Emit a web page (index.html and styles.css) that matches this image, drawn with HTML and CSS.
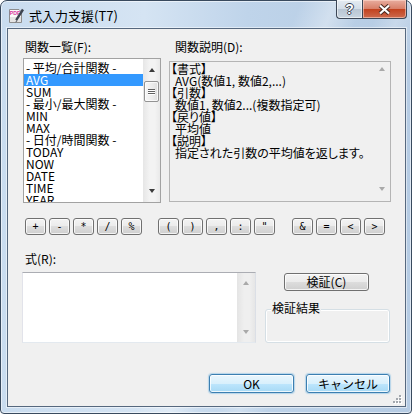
FILE: index.html
```html
<!DOCTYPE html>
<html lang="ja">
<head>
<meta charset="utf-8">
<title>式入力支援(T7)</title>
<link rel="stylesheet" href="styles.css">
</head>
<body>
<div class="window">
  <div class="titlebar">
    <svg class="app-icon" width="16" height="16" viewBox="0 0 16 16">
      <path d="M1.5 1.5h9.5l2.5 2.5v10.5h-12z" fill="#fbfbfb" stroke="#8d8d8d"/>
      <rect x="2" y="9" width="11" height="5" fill="#e4e4e4"/>
      <text x="1.8" y="7.2" font-size="5.2" font-family="Liberation Sans, sans-serif" font-weight="bold" fill="#d8379b">PDF</text>
      <path d="M15 1.5 L8.2 12.2" stroke="#3d4450" stroke-width="2.4"/>
      <path d="M8.2 12.2 L7.4 14.4 L9.4 13" fill="#3d4450"/>
    </svg>
    <span class="title">式入力支援(T7)</span>
    <div class="caption">
      <div class="cap help"><span>?</span></div>
      <div class="cap close">
        <svg width="13" height="11" viewBox="0 0 13 11">
          <path d="M2 1.5 L11 9.5 M11 1.5 L2 9.5" stroke="#4a2a22" stroke-width="4.2"/>
          <path d="M2 1.5 L11 9.5 M11 1.5 L2 9.5" stroke="#ffffff" stroke-width="2.2"/>
        </svg>
      </div>
    </div>
  </div>

  <div class="client">
    <div class="top">
      <div class="list-col">
        <div class="label">関数一覧(F):</div>
        <div class="listbox">
          <ul class="items">
            <li>- 平均/合計関数 -</li>
            <li class="sel">AVG</li>
            <li>SUM</li>
            <li>- 最小/最大関数 -</li>
            <li>MIN</li>
            <li>MAX</li>
            <li>- 日付/時間関数 -</li>
            <li>TODAY</li>
            <li>NOW</li>
            <li>DATE</li>
            <li>TIME</li>
            <li>YEAR</li>
          </ul>
          <div class="vscroll">
            <div class="sb-btn"><i class="arrow up"></i></div>
            <div class="thumb"><i></i><i></i><i></i></div>
            <div class="track"></div>
            <div class="sb-btn"><i class="arrow down"></i></div>
          </div>
        </div>
      </div>
      <div class="desc-col">
        <div class="label">関数説明(D):</div>
        <div class="descbox">
          <div class="desc-text">
            <div class="h">【書式】</div>
            <div class="v">AVG(数値1, 数値2,...)</div>
            <div class="h">【引数】</div>
            <div class="v">数値1, 数値2...(複数指定可)</div>
            <div class="h">【戻り値】</div>
            <div class="v">平均値</div>
            <div class="h">【説明】</div>
            <div class="v">指定された引数の平均値を返します。</div>
          </div>
          <div class="vscroll disabled">
            <div class="sb-btn top-btn"><i class="arrow up"></i></div>
            <div class="track"></div>
            <div class="sb-btn bottom-btn"><i class="arrow down"></i></div>
          </div>
        </div>
      </div>
    </div>

    <div class="opbar">
      <div class="opgroup">
        <button class="op">+</button>
        <button class="op">-</button>
        <button class="op">*</button>
        <button class="op">/</button>
        <button class="op">%</button>
      </div>
      <div class="opgroup g2">
        <button class="op">(</button>
        <button class="op">)</button>
        <button class="op">,</button>
        <button class="op">:</button>
        <button class="op">"</button>
      </div>
      <div class="opgroup g3">
        <button class="op">&amp;</button>
        <button class="op">=</button>
        <button class="op">&lt;</button>
        <button class="op">&gt;</button>
      </div>
    </div>

    <div class="bottom">
      <div class="expr-col">
        <div class="label">式(R):</div>
        <div class="exprbox">
          <div class="expr-input"></div>
          <div class="vscroll expr-scroll">
            <div class="sb-btn"><i class="arrow up dim"></i></div>
            <div class="track"></div>
            <div class="sb-btn"><i class="arrow down dim"></i></div>
          </div>
        </div>
      </div>
      <div class="verify-col">
        <button class="btn verify">検証(C)</button>
        <div class="result">
          <span class="legend">検証結果</span>
        </div>
      </div>
    </div>

    <div class="actions">
      <button class="btn default ok">OK</button>
      <button class="btn default cancel">キャンセル</button>
    </div>

    <svg class="grip" width="9" height="9" viewBox="0 0 9 9">
      <g fill="#ffffff">
        <rect x="7" y="1" width="2" height="2"/><rect x="4" y="4" width="2" height="2"/><rect x="7" y="4" width="2" height="2"/>
        <rect x="1" y="7" width="2" height="2"/><rect x="4" y="7" width="2" height="2"/><rect x="7" y="7" width="2" height="2"/>
      </g>
      <g fill="#a3a8ae">
        <rect x="6" y="0" width="2" height="2"/><rect x="3" y="3" width="2" height="2"/><rect x="6" y="3" width="2" height="2"/>
        <rect x="0" y="6" width="2" height="2"/><rect x="3" y="6" width="2" height="2"/><rect x="6" y="6" width="2" height="2"/>
      </g>
    </svg>
  </div>
</div>
</body>
</html>
```

FILE: styles.css
```css
* { box-sizing: border-box; }

html, body {
  margin: 0;
  padding: 0;
}

body {
  width: 412px;
  height: 414px;
  overflow: hidden;
  background: #ffffff;
  font-family: "Noto Sans CJK JP", "Noto Sans", sans-serif;
  font-size: 12px;
  color: #000;
}

/* ---------- window frame ---------- */
.window {
  width: 412px;
  height: 414px;
  display: flex;
  flex-direction: column;
  padding: 0 5px 6px 6px;
  border: 1px solid #394a5e;
  border-radius: 7px 7px 4px 4px;
  background:
    linear-gradient(112deg, rgba(255,255,255,0) 52%, rgba(255,255,255,0.35) 58%, rgba(255,255,255,0) 63%, rgba(255,255,255,0) 66%, rgba(255,255,255,0.25) 70%, rgba(255,255,255,0) 75%),
    linear-gradient(90deg, #c9dcef 0%, #d5e4f3 35%, #bfd4ea 60%, #b5cbe3 100%);
  box-shadow: inset 0 0 0 1px rgba(255,255,255,0.55);
}

.titlebar {
  height: 27px;
  display: flex;
  align-items: flex-start;
  flex: none;
}

.app-icon {
  margin: 7px 0 0 1px;
  flex: none;
}

.title {
  margin: 7px 0 0 5px;
  font-size: 13px;
  line-height: 16px;
  color: #000;
}

.caption {
  margin-left: auto;
  margin-right: -1px;
  margin-top: -1px;
  display: flex;
}

.cap {
  height: 19px;
  display: flex;
  align-items: center;
  justify-content: center;
  border: 1px solid #3b4656;
  border-top: none;
}

.help {
  width: 26px;
  border-right: none;
  border-radius: 0 0 0 4px;
  background: linear-gradient(180deg, #e4ebf2 0%, #d3dde8 48%, #b9c6d4 52%, #c9d5e1 100%);
  box-shadow: inset 0 0 0 1px rgba(255,255,255,0.55);
}

.help span {
  font-family: "Liberation Sans", sans-serif;
  font-weight: bold;
  font-size: 14px;
  line-height: 14px;
  color: #ffffff;
  text-shadow: 1px 0 0 #3c4654, -1px 0 0 #3c4654, 0 1px 0 #3c4654, 0 -1px 0 #3c4654;
}

.close {
  width: 45px;
  border-radius: 0 0 4px 0;
  background: linear-gradient(180deg, #e8ad9f 0%, #d8806a 48%, #c2421f 52%, #cd6a4d 100%);
  box-shadow: inset 0 0 0 1px rgba(255,220,210,0.55);
}

/* ---------- client ---------- */
.client {
  flex: 1;
  position: relative;
  border: 1px solid #56687e;
  background: #f0f0f0;
  box-shadow: 0 0 0 1px rgba(255,255,255,0.5);
  display: flex;
  flex-direction: column;
}

.label {
  height: 12px;
  line-height: 12px;
  white-space: nowrap;
}

.top {
  display: flex;
  gap: 8px;
  padding: 12px 0 0 15px;
}

.list-col { width: 138px; }
.list-col .label { padding-left: 2px; }

.listbox {
  margin-top: 5px;
  height: 145px;
  border: 1px solid #a2a2a2;
  background: #ffffff;
  display: flex;
  overflow: hidden;
}

.items {
  flex: 1;
  list-style: none;
  margin: 0;
  padding: 3px 0 0 0;
  overflow: hidden;
}

.items li {
  height: 12px;
  line-height: 12px;
  padding-left: 2px;
  white-space: nowrap;
}

.items li.sel {
  background: #3399ff;
  color: #ffffff;
}

.desc-col { width: 222px; }
.desc-col .label { padding-left: 6px; }

.descbox {
  margin-top: 8px;
  height: 141px;
  border: 1px solid #b4b4b4;
  background: #f0f0f0;
  display: flex;
}

.desc-text {
  flex: 1;
  padding: 1px 0 0 1px;
  line-height: 12px;
  font-feature-settings: "palt";
  overflow: hidden;
}

.desc-text .h,
.desc-text .v {
  height: 12px;
  white-space: nowrap;
}

.desc-text .v { padding-left: 4px; }

/* ---------- scrollbars ---------- */
.vscroll {
  width: 17px;
  flex: none;
  display: flex;
  flex-direction: column;
  background: linear-gradient(90deg, #e6e6e6 0%, #f3f3f3 40%, #f3f3f3 70%, #e9e9e9 100%);
}

.vscroll.disabled {
  background: transparent;
}

.sb-btn {
  height: 22px;
  display: flex;
  align-items: center;
  justify-content: center;
  flex: none;
}

.vscroll.disabled .top-btn { height: 14px; }
.vscroll.disabled .bottom-btn { height: 24px; }

.track { flex: 1; }

.arrow {
  width: 0;
  height: 0;
  border-left: 3.5px solid transparent;
  border-right: 3.5px solid transparent;
}

.arrow.up { border-bottom: 4px solid #3b3b3b; }
.arrow.down { border-top: 4px solid #3b3b3b; }

.vscroll.disabled .arrow.up,
.arrow.up.dim { border-bottom-color: #a9a9a9; }
.vscroll.disabled .arrow.down,
.arrow.down.dim { border-top-color: #a9a9a9; }

.thumb {
  height: 21px;
  margin: 0 1px;
  border: 1px solid #939393;
  border-radius: 2px;
  background: linear-gradient(90deg, #f7f7f7 0%, #ececec 55%, #dedede 100%);
  box-shadow: inset 0 0 0 1px rgba(255,255,255,0.7);
  display: flex;
  flex-direction: column;
  align-items: center;
  justify-content: center;
  gap: 1px;
  flex: none;
}

.thumb i {
  width: 7px;
  height: 1px;
  background: #606060;
  box-shadow: 0 1px 0 #ffffff;
}

.expr-scroll {
  width: 18px;
  background: linear-gradient(90deg, #e4e4e4 0%, #efefef 40%, #efefef 70%, #e6e6e6 100%);
}

.expr-scroll .sb-btn:first-child { height: 20px; }
.expr-scroll .sb-btn:last-child { height: 20px; }

/* ---------- buttons ---------- */
button {
  font-family: inherit;
  color: #000;
  padding: 0;
  margin: 0;
  cursor: default;
}

.op,
.btn {
  border: 1px solid #707070;
  border-radius: 3px;
  background: linear-gradient(180deg, #f3f3f3 0%, #ebebeb 50%, #dddddd 50%, #cfcfcf 100%);
  box-shadow: inset 0 0 0 1px rgba(255,255,255,0.75);
  display: flex;
  align-items: center;
  justify-content: center;
}

.opbar {
  display: flex;
  margin-top: 15px;
  padding-left: 17px;
  height: 17px;
}

.opgroup {
  display: flex;
  gap: 3px;
}

.opgroup.g2 { margin-left: 16px; }
.opgroup.g3 { margin-left: 17px; }

.op {
  width: 21px;
  height: 17px;
  font-family: "DejaVu Sans Mono", monospace;
  font-size: 10px;
  line-height: 10px;
}

.bottom {
  display: flex;
  margin-top: 18px;
  padding-left: 14px;
}

.expr-col { width: 234px; }
.expr-col .label { padding-left: 3px; }

.exprbox {
  margin-top: 7px;
  height: 71px;
  border: 1px solid;
  border-color: #abadb3 #dbdfe6 #e3e9ef #e2e3ea;
  background: #ffffff;
  display: flex;
}

.expr-input { flex: 1; }

.verify-col {
  width: 125px;
  margin-left: 9px;
  display: flex;
  flex-direction: column;
}

.btn {
  font-size: 12px;
  line-height: 12px;
}

.verify {
  width: 85px;
  height: 18px;
  margin: 20px 0 0 19px;
}

.result {
  position: relative;
  margin-top: 18px;
  height: 34px;
  border: 1px solid #d5dfe5;
  border-radius: 3px;
  box-shadow: inset 0 0 0 1px #ffffff;
}

.legend {
  position: absolute;
  top: -8px;
  left: 5px;
  padding: 0 1px;
  line-height: 12px;
  background: #f0f0f0;
}

.actions {
  display: flex;
  justify-content: flex-end;
  gap: 12px;
  margin-top: 31px;
  padding-right: 15px;
}

.btn.default {
  height: 19px;
  border-color: #3c7fb1;
  background: linear-gradient(180deg, #eaf6fd 0%, #d9f0fc 50%, #bee6fd 50%, #a7d9f5 100%);
  box-shadow: inset 0 0 0 1px rgba(255,255,255,0.8), 0 0 1px 1px rgba(72,160,220,0.35);
}

.ok { width: 85px; }
.cancel { width: 84px; }

.grip {
  position: absolute;
  right: 3px;
  bottom: 2px;
}
```
